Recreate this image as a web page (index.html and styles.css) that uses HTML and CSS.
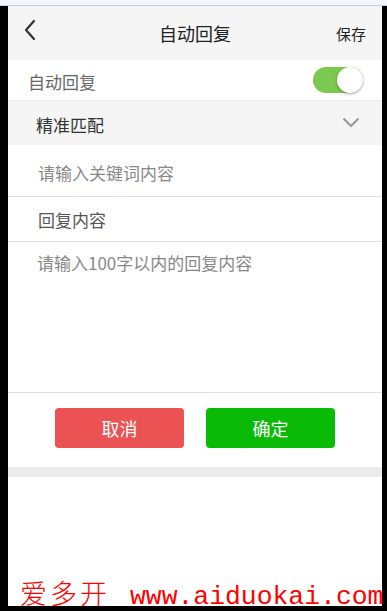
FILE: index.html
```html
<!DOCTYPE html>
<html lang="zh">
<head>
<meta charset="utf-8">
<title>自动回复</title>
<link rel="stylesheet" href="styles.css">
</head>
<body>
<div class="topbar"></div>
<div class="frame">
  <div class="app">
    <header class="header">
      <span class="back">
        <svg width="14" height="22" viewBox="0 0 14 22"><path d="M11 2 L3 11 L11 20" fill="none" stroke="#333" stroke-width="2.2" stroke-linecap="round" stroke-linejoin="round"/></svg>
      </span>
      <h1 class="title">自动回复</h1>
      <span class="save">保存</span>
    </header>
    <div class="row row-switch">
      <span class="label">自动回复</span>
      <span class="switch"><span class="knob"></span></span>
    </div>
    <div class="row row-select">
      <span class="select-text">精准匹配</span>
      <svg class="chev" width="18" height="11" viewBox="0 0 18 11"><path d="M1.5 1.5 L9 9 L16.5 1.5" fill="none" stroke="#999" stroke-width="2"/></svg>
    </div>
    <div class="row row-input"><span class="placeholder">请输入关键词内容</span></div>
    <div class="row row-heading"><span class="heading">回复内容</span></div>
    <div class="textarea"><span class="placeholder">请输入100字以内的回复内容</span></div>
    <div class="actions">
      <button class="btn btn-cancel">取消</button>
      <button class="btn btn-ok">确定</button>
    </div>
    <div class="divider"></div>
  </div>
  <div class="watermark"><span class="wm-cn">爱多开</span><span class="wm-url">www.aiduokai.com</span></div>
</div>
</body>
</html>
```

FILE: styles.css
```css
* { box-sizing: border-box; }
html, body { margin: 0; padding: 0; }
body {
  width: 387px;
  height: 611px;
  overflow: hidden;
  font-family: "Noto Sans CJK SC", "Noto Sans", sans-serif;
  background: #000;
}
.topbar {
  height: 6px;
  background: #f3f6fb;
  border-bottom: 1px solid #c4d2e8;
}
.frame {
  position: relative;
  height: 605px;
  padding: 0 5px 5px 8px;
  background: #000;
}
.app {
  height: 600px;
  background: #fff;
}
.header {
  height: 54px;
  background: #f5f5f5;
  display: flex;
  align-items: center;
  justify-content: space-between;
  padding: 0 16px 0 15px;
  position: relative;
}
.back { display: flex; width: 14px; height: 22px; margin-top: -6px; }
.title {
  margin: 0;
  font-size: 18px;
  font-weight: normal;
  color: #222;
  position: absolute;
  left: 0; right: 0;
  text-align: center;
  pointer-events: none;
  line-height: 54px;
}
.save { font-size: 15px; color: #222; margin-top: 1px; }
.row {
  display: flex;
  align-items: center;
}
.row-switch {
  height: 40px;
  padding: 0 19px 0 20px;
  justify-content: space-between;
}
.label { font-size: 17px; color: #666; margin-top: 3px; }
.switch {
  width: 50px;
  height: 26px;
  border-radius: 13px;
  background: #7dc850;
  position: relative;
}
.knob {
  position: absolute;
  right: 0; top: 0;
  width: 26px; height: 26px;
  border-radius: 50%;
  background: #fff;
  box-shadow: 0 1px 3px rgba(0,0,0,0.35);
}
.row-select {
  height: 45px;
  background: #f5f5f5;
  border-top: 1px solid #ebebeb;
  padding: 0 22px 0 28px;
  justify-content: space-between;
}
.select-text { font-size: 17px; color: #333; margin-top: 3px; }
.chev { margin-top: -2px; }
.row-input {
  height: 52px;
  padding: 4px 30px 0;
  border-bottom: 1px solid #e0e0e0;
}
.placeholder { font-size: 17px; color: #888; }
.row-heading {
  height: 45px;
  padding: 0 30px;
  border-bottom: 1px solid #e0e0e0;
}
.heading { font-size: 17px; color: #555; }
.textarea {
  height: 151px;
  padding: 8px 29px 0;
  border-bottom: 1px solid #e0e0e0;
}
.actions {
  display: flex;
  justify-content: center;
  gap: 22px;
  padding-top: 15px;
  height: 74px;
}
.btn {
  width: 129px;
  height: 40px;
  border: none;
  border-radius: 4px;
  color: #fff;
  font-family: inherit;
  font-size: 18px;
  padding: 0;
}
.btn-cancel { background: #eb5253; }
.btn-ok { background: #09bb07; }
.divider {
  height: 10px;
  background: #ebebeb;
}
.watermark {
  position: absolute;
  left: 20px;
  top: 572px;
  color: #ff0000;
  white-space: nowrap;
  line-height: 30px;
  display: flex;
  align-items: baseline;
}
.wm-cn {
  font-family: "Noto Sans CJK SC", sans-serif;
  font-weight: 300;
  font-size: 27px;
  letter-spacing: 3px;
}
.wm-url {
  font-family: "Liberation Mono", monospace;
  font-size: 26.4px;
  margin-left: 20px;
}
```
